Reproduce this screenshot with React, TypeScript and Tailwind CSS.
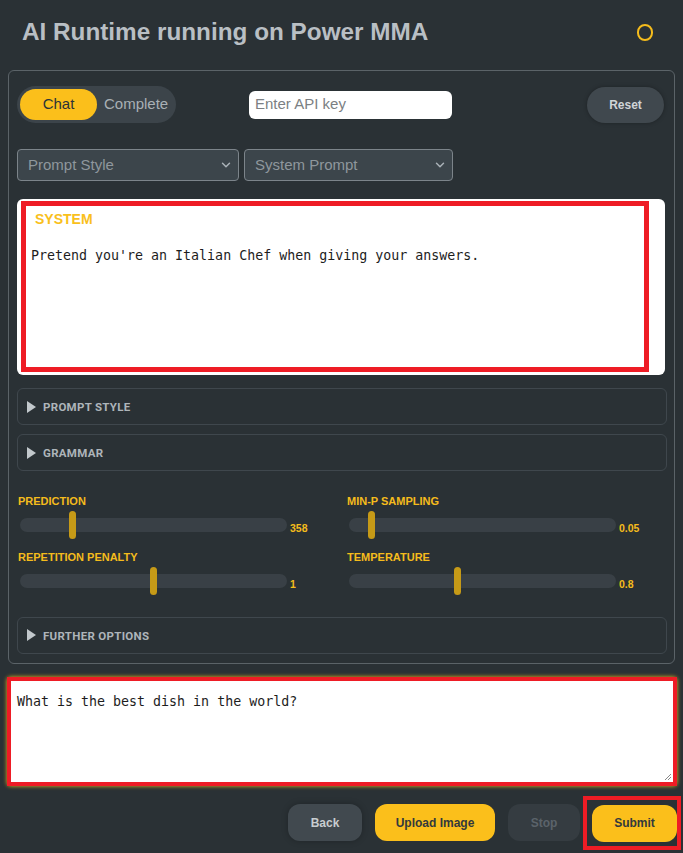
import React from "react";

const sliders = [
  { label: "PREDICTION", value: "358", pos: 0.197 },
  { label: "MIN-P SAMPLING", value: "0.05", pos: 0.084 },
  { label: "REPETITION PENALTY", value: "1", pos: 0.5 },
  { label: "TEMPERATURE", value: "0.8", pos: 0.407 },
];

function Chevron() {
  return (
    <svg width="14" height="14" viewBox="0 0 24 24" fill="none" stroke="#aab2b8" strokeWidth="2.5" strokeLinecap="round" strokeLinejoin="round">
      <path d="m6 9 6 6 6-6" />
    </svg>
  );
}

function Accordion({ label }: { label: string }) {
  return (
    <div className="flex h-[37px] w-[650px] items-center gap-[7px] rounded-md border border-[#3f474d] pl-[9px]">
      <svg width="9" height="12" viewBox="0 0 9 12">
        <path d="M0 0 L9 6 L0 12 Z" fill="#c2c8cc" />
      </svg>
      <span className="mt-[3px] font-['Roboto',sans-serif] text-[11.5px] font-bold tracking-[0.3px] text-[#aeb5ba]">{label}</span>
    </div>
  );
}

function Slider({ label, value, pos }: { label: string; value: string; pos: number }) {
  return (
    <div className="flex flex-col">
      <div className="text-[11px] font-bold leading-[14px] text-[#f5bc1c]">{label}</div>
      <div className="mt-[5px] flex items-center">
        <div className="relative ml-[2px] h-[14px] w-[267px] rounded-full bg-[#394046]">
          <div
            className="absolute top-[-7px] h-[28px] w-[7px] rounded-full bg-[#c69a17]"
            style={{ left: `calc(${pos * 100}% - 3.5px)` }}
          />
        </div>
        <span className="ml-[3px] mt-[8px] text-[10.5px] font-bold text-[#f5bc1c]">{value}</span>
      </div>
    </div>
  );
}

export default function App() {
  return (
    <div className="h-[853px] w-[683px] overflow-hidden bg-[#2a3135] font-['Liberation_Sans',Arial,sans-serif]">
      <header className="flex h-[64px] items-center justify-between pl-[22px] pr-[30px]">
        <h1 className="text-[24.3px] font-bold text-[#b9bfc4]">AI Runtime running on Power MMA</h1>
        <div className="h-[17px] w-[16px] rounded-full border-2 border-[#f5bc1c]" />
      </header>

      <div className="mx-[8px] mt-[6px] h-[594px] rounded-md border border-[#5b6368] pl-[8px] pt-[15px]">
        <div className="flex items-center">
          <div className="flex h-[37px] w-[159px] items-center rounded-full bg-[#3c444a] px-[3px]">
            <div className="flex h-[31px] w-[77px] items-center justify-center rounded-full bg-[#fbbf1b] text-[15px] text-[#2c3338]">
              Chat
            </div>
            <span className="ml-[7px] text-[15px] text-[#a9b0b5]">Complete</span>
          </div>
          <div className="ml-[73px] flex h-[28px] w-[203px] items-center rounded-md bg-white px-[6px] text-[15px] text-[#7b7f83]">
            Enter API key
          </div>
          <button className="ml-auto mr-[10px] h-[36px] w-[77px] rounded-full bg-[#40484e] text-[12px] font-bold text-[#d0d4d7] shadow-[0_0_4px_rgba(0,0,0,0.3)]">
            Reset
          </button>
        </div>

        <div className="mt-[26px] flex gap-[5px]">
          <div className="flex h-[32px] w-[222px] items-center justify-between rounded border border-[#7c848a] bg-[#3c454b] pl-[10px] pr-[5px] text-[15px] text-[#8f979d]">
            Prompt Style
            <Chevron />
          </div>
          <div className="flex h-[32px] w-[209px] items-center justify-between rounded border border-[#7c848a] bg-[#3c454b] pl-[10px] pr-[5px] text-[15px] text-[#8f979d]">
            System Prompt
            <Chevron />
          </div>
        </div>

        <div className="mt-[18px] h-[176px] w-[648px] rounded-md bg-white pb-[3px] pl-[4px] pr-[16px] pt-[2px]">
          <div className="h-full w-full border-[5px] border-[#ee1c25] pl-[5px] pt-[3px]">
            <div className="ml-[4px] text-[14px] font-bold text-[#f9c01c]">SYSTEM</div>
            <div className="mt-[16px] font-['DejaVu_Sans_Mono',monospace] text-[13.3px] text-[#1d1d1d]">
              Pretend you're an Italian Chef when giving your answers.
            </div>
          </div>
        </div>

        <div className="mt-[13px] flex flex-col gap-[9px]">
          <Accordion label="PROMPT STYLE" />
          <Accordion label="GRAMMAR" />
        </div>

        <div className="mt-[23px] grid w-[650px] grid-cols-[329px_1fr] gap-y-[13px] pl-[1px]">
          {sliders.map((s) => (
            <Slider key={s.label} {...s} />
          ))}
        </div>

        <div className="mt-[24px]">
          <Accordion label="FURTHER OPTIONS" />
        </div>
      </div>

      <div className="mx-[7px] mt-[13px] h-[109px] w-[670px] rounded-sm bg-white shadow-[0_0_4px_#f5bc1c]">
        <div className="relative h-full w-full border-[4px] border-[#ee1c25] pl-[6px] pt-[11px] font-['DejaVu_Sans_Mono',monospace] text-[13.3px] text-[#1d1d1d]">
          What is the best dish in the world?
          <svg className="absolute bottom-[1px] right-[1px]" width="8" height="8" viewBox="0 0 8 8">
            <path d="M7 1 L1 7 M7 4 L4 7" stroke="#888" strokeWidth="1" />
          </svg>
        </div>
      </div>

      <div className="mt-[10px] flex justify-end pr-[2px]">
        <div className="mt-[8px] flex gap-[13px]">
          <button className="h-[37px] w-[74px] rounded-xl bg-[#41494f] text-[12px] font-bold text-[#c8cdd0] shadow-[0_0_6px_rgba(0,0,0,0.25)]">
            Back
          </button>
          <button className="h-[37px] w-[120px] rounded-xl bg-[#fbbf1b] text-[12px] font-bold text-[#33393d]">
            Upload Image
          </button>
          <button className="h-[37px] w-[72px] rounded-xl bg-[#353c41] text-[12px] font-bold text-[#5b636a]">
            Stop
          </button>
        </div>
        <div className="ml-[3px] flex h-[54px] w-[98px] items-center justify-end border-[4px] border-[#ee1c25]">
          <button className="h-[37px] w-[85px] rounded-xl bg-[#fbbf1b] text-[12px] font-bold text-[#33393d]">
            Submit
          </button>
        </div>
      </div>
    </div>
  );
}
